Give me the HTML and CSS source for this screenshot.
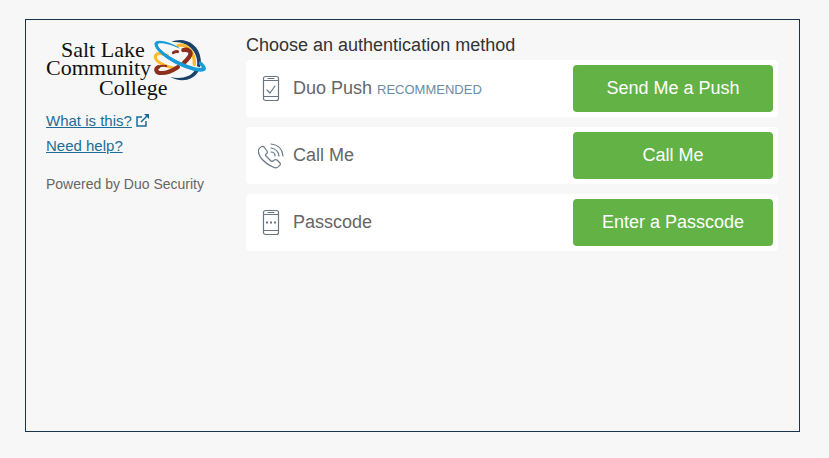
FILE: index.html
```html
<!DOCTYPE html>
<html lang="en">
<head>
    <meta charset="UTF-8">
    <meta name="viewport" content="width=device-width, initial-scale=1">
    <title>Two-Factor Authentication</title>
    <link rel="stylesheet" href="styles.css">
</head>
<body>
    <div class="frame">
        <aside class="sidebar">
            <svg class="logo" viewBox="0 0 160 64" role="img" aria-label="Salt Lake Community College">
                <g class="logo-text">
                    <text x="15" y="19">Salt Lake</text>
                    <text x="0" y="37">Community</text>
                    <text x="53" y="57">College</text>
                </g>
                <!-- globe rings -->
                <g transform="scale(.33333) translate(315 -6)" fill="none" stroke-linecap="round">
                    <path d="M62 18C92 2 143 18 149 68C151 80 149 89 146 94L138 91C144 55 118 14 62 18Z" fill="#1b4168"/>
                    <path d="M58 123C80 136 124 140 143 105L132 103C119 124 88 130 58 123Z" fill="#1b4168"/>
                    <path d="M49 58C34 52 17 50 13 60C11 73 32 91 78 98" stroke="#fdb830" stroke-width="9"/>
                    <path d="M81 29C109 21 132 51 130 85" stroke="#fdb830" stroke-width="10"/>
                    <path d="M67 50Q73 45 80 47" stroke="#8c301d" stroke-width="9"/>
                    <path d="M97 42C111 39 121 46 118 56C115 66 107 73 99 80" stroke="#8c301d" stroke-width="13"/>
                    <path d="M81 93C65 104 46 113 26 111C13 108 13 97 22 93" stroke="#8c301d" stroke-width="12"/>
                    <path d="M22 93Q32 87 46 90" stroke="#8c301d" stroke-width="6"/>
                    <path d="M88 38C56 15 14 7 11 22C10 49 79 95 137 106C151 109 163 107 165 99C165 90 157 81 146 74L143 84L153 94C145 99 120 92 91 79C53 62 20 38 20 26C20 18 46 20 88 38Z" fill="#189bd7"/>
                    <path d="M15 25C18 47 77 87 132 100" stroke="#189bd7" stroke-width="9"/>
                </g>
            </svg>
            <nav class="help-links">
                <a href="#">What is this?</a>
                <svg class="external" viewBox="0 0 13 13" aria-hidden="true">
                    <path d="M6 3H1v9h9V7M5 8l6-6"/>
                    <path d="M8 0h5v5z" class="tip"/>
                </svg>
                <br>
                <a href="#">Need help?</a>
            </nav>
            <p class="powered">Powered by Duo Security</p>
        </aside>

        <main class="methods">
            <h1>Choose an authentication method</h1>
            <div class="method">
                <svg class="icon" viewBox="0 0 26 28" aria-hidden="true">
                    <rect x="5.500" y="1.500" width="15" height="24" rx="2"/>
                    <path d="M5.500 5.500h15M5.500 21.500h15M10 3.500h6M9 15l3 3 5-7"/>
                </svg>
                <span class="name">Duo Push <small>RECOMMENDED</small></span>
                <button type="button">Send Me a Push</button>
            </div>
            <div class="method">
                <svg class="icon" viewBox="0 0 26 28" aria-hidden="true">
                    <path d="M1 7Q4 3 6 5L9 9Q10 11 8 12Q7 13 8 14L13 19Q14 20 15 19Q17 17 19 18L22 21Q23 23 21 24Q19 27 15 25Q8 22 3 16Q-1 10 1 7Z"/>
                    <path d="M13 2Q24 3 25 14M13 6Q20 7 21 14M13 10Q17 10 17 14"/>
                </svg>
                <span class="name">Call Me</span>
                <button type="button">Call Me</button>
            </div>
            <div class="method">
                <svg class="icon" viewBox="0 0 26 28" aria-hidden="true">
                    <rect x="5.500" y="1.500" width="15" height="24" rx="2"/>
                    <path d="M5.500 5.500h15M5.500 21.500h15M10 3.500h6"/>
                    <path d="M8 13.500h2m2 0h2m2 0h2" class="dots"/>
                </svg>
                <span class="name">Passcode</span>
                <button type="button">Enter a Passcode</button>
            </div>
        </main>
    </div>
</body>
</html>
```
FILE: styles.css
```css
* {
    box-sizing: border-box;
}
body {
    margin: 0;
    min-height: 100vh;
    display: flex;
    padding: 19px 29px 26px 25px;
    background: #f7f7f7;
    color: #666;
    font-family: "Liberation Sans", Arial, sans-serif;
}
.frame {
    flex: 1;
    display: flex;
    align-items: flex-start;
    gap: 40px;
    padding: 15px 21px 20px 20px;
    border: 1px solid #1b344d;
}
.sidebar {
    flex: 0 0 160px;
    padding-top: 3px;
}
.logo {
    display: block;
    width: 100%;
    height: 64px;
    overflow: visible;
}
.logo-text {
    fill: #111;
    font-family: "Liberation Serif", "Times New Roman", serif;
    font-size: 22px;
}
.help-links {
    margin-top: 6px;
    font-size: 15px;
    line-height: 25px;
}
.help-links a {
    color: #1d6d97;
}
.external {
    width: 13px;
    height: 13px;
    fill: none;
    stroke: #1d6d97;
    stroke-width: 1.5;
    vertical-align: -1px;
}
.external .tip {
    fill: #1d6d97;
    stroke: none;
}
.powered {
    margin: 18px 0 0;
    font-size: 14px;
    line-height: 16px;
    white-space: nowrap;
}
.methods {
    flex: 1;
}
h1 {
    margin: 0 0 5px;
    color: #333;
    font-size: 18px;
    font-weight: normal;
    line-height: 20px;
}
.method {
    display: flex;
    align-items: center;
    margin-bottom: 10px;
    padding: 5px 5px 5px 12px;
    background: #fff;
    border-radius: 4px;
}
.icon {
    width: 26px;
    height: 28px;
    margin-right: 9px;
    fill: none;
    stroke: #687783;
    stroke-width: 1.2;
    stroke-linecap: round;
    stroke-linejoin: round;
}
.icon .dots {
    stroke-width: 2;
    stroke-linecap: butt;
}
.name {
    flex: 1;
    font-size: 18px;
}
.name small {
    color: #6b8ba3;
    font-size: 13px;
}
button {
    width: 200px;
    height: 47px;
    padding: 0;
    border: 0;
    border-radius: 4px;
    background: #63b246;
    color: #fff;
    font-family: inherit;
    font-size: 18px;
    cursor: pointer;
}
button:hover {
    background: #579d3d;
}
```
